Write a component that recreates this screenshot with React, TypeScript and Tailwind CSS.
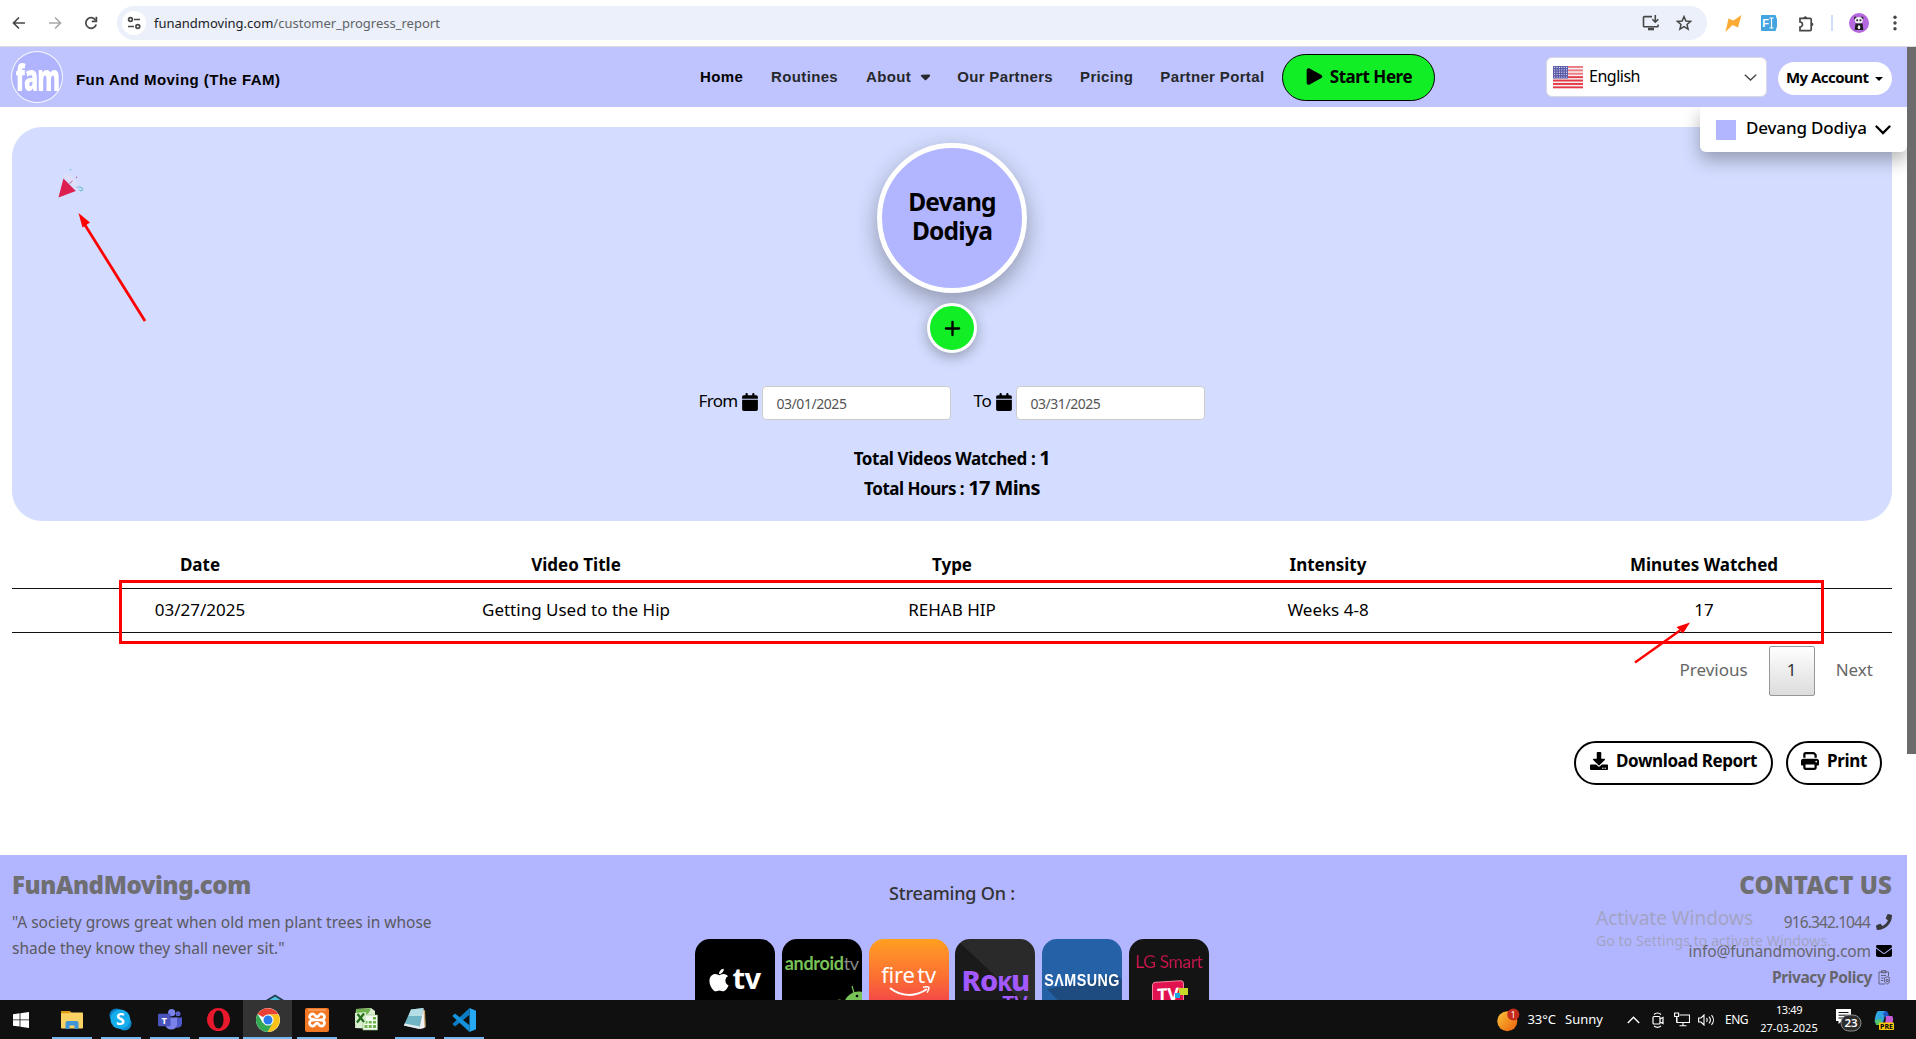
import type { ReactNode } from 'react'
import { FaPlay, FaPlus, FaCalendar, FaPrint, FaEnvelope, FaCaretDown, FaApple } from 'react-icons/fa6'
import { FaDownload, FaPhone } from 'react-icons/fa'

function BrowserBar() {
  return (
    <div className="flex h-[47px] shrink-0 items-center border-b border-[#dcdcdc] bg-white text-[#474747]">
      <svg className="ml-[11px] size-4" viewBox="0 0 16 16" fill="none" stroke="#474747" strokeWidth="1.7">
        <path d="M14 8H3M8 2.5L2.5 8L8 13.5" />
      </svg>
      <svg className="ml-[20px] size-4" viewBox="0 0 16 16" fill="none" stroke="#a9a9a9" strokeWidth="1.7">
        <path d="M2 8h11M8 2.5L13.5 8L8 13.5" />
      </svg>
      <svg className="ml-[20px] size-4" viewBox="0 0 16 16" fill="none" stroke="#474747" strokeWidth="1.7">
        <path d="M13.2 9.4A5.3 5.3 0 1 1 12.6 5.2" />
        <path d="M13.4 1.8v4.6H8.8" />
      </svg>
      <div className="ml-[18px] flex h-[34px] w-[1590px] items-center rounded-full bg-[#ebf0fa] pl-[5px]">
        <div className="flex size-6 items-center justify-center rounded-full bg-white">
          <svg className="size-[14px]" viewBox="0 0 14 14" fill="none" stroke="#474747" strokeWidth="1.7">
            <circle cx="3.5" cy="3.5" r="1.9" />
            <path d="M7 3.5h6M1 10.5h6" />
            <circle cx="10.8" cy="10.5" r="1.9" />
          </svg>
        </div>
        <div className="ml-2 text-[13px] leading-none">
          <span className="text-[#202124]">funandmoving.com</span>
          <span className="text-[#5f6368]">/customer_progress_report</span>
        </div>
        <svg className="ml-auto h-4 w-[18px]" viewBox="0 0 18 16" fill="none" stroke="#474747" strokeWidth="1.6">
          <path d="M10 1.6H2.4a.9.9 0 0 0-.9.9v8.4c0 .5.4.9.9.9h12.8c.5 0 .9-.4.9-.9V9.4" />
          <path d="M13.3 0v6.8M10.3 4.2l3 3l3-3" />
          <path d="M6 14h6" strokeWidth="2.6" />
        </svg>
        <svg className="mr-[15px] ml-[16px] size-[16px]" viewBox="0 0 16 16" fill="none" stroke="#474747" strokeWidth="1.5">
          <path d="M8 1.6l1.9 4.4l4.7.4l-3.6 3.1l1.1 4.7L8 11.7l-4.1 2.5L5 9.5L1.400 6.400l4.700-.4z" />
        </svg>
      </div>
      <svg className="ml-[17px] h-[17px] w-[18px]" viewBox="0 0 18 17">
        <path d="M1.500 17L4.500 3.500L9.500 5.500L17.500 0L14 12.500L8.500 10z" fill="#fbab35" />
      </svg>
      <div className="relative ml-[19px] flex h-4 w-4 items-center justify-center rounded-[1px] bg-[#43a4e0] text-[11px] leading-none font-bold text-white">
        <svg className="absolute inset-0 h-4 w-4" viewBox="0 0 16 16" fill="none" stroke="#fff">
          <path d="M8.500 3h4M8.500 13h4M10.500 3v10" strokeWidth="1.200" />
          <path d="M14.500 0L16 4.500V0z M14.500 16L16 11.500V16z" fill="#fff" stroke="none" />
        </svg>
        <span className="mr-[7px] font-['Liberation_Sans']">F</span>
      </div>
      <svg className="ml-[21px] h-[17px] w-[17px]" viewBox="0 0 17 17" fill="none" stroke="#474747" strokeWidth="1.7">
        <path d="M2 3.400h10.200a1 1 0 0 1 1 1v10.200a1 1 0 0 1-1 1H2v-3.600a2.500 2.500 0 0 0 0-5z" />
        <path d="M5.800 3.200a1.500 1.500 0 0 1 3 0zM13.400 7.800a1.500 1.500 0 0 1 0 3z" fill="#474747" strokeWidth="1" />
      </svg>
      <div className="ml-[16px] h-4 w-[2px] bg-[#cfdffb]" />
      <svg className="ml-[16px] size-5" viewBox="0 0 20 20">
        <circle cx="10" cy="10" r="10" fill="#b468e0" />
        <circle cx="6.500" cy="5" r="1.500" fill="#222" />
        <circle cx="13" cy="5" r="1.500" fill="#222" />
        <ellipse cx="9.800" cy="7.200" rx="4" ry="3.200" fill="#f0eef2" />
        <circle cx="8.200" cy="7.200" r="1" fill="#222" />
        <circle cx="11.500" cy="7.200" r="1" fill="#222" />
        <path d="M6.500 10.500h7l.8 6.500h-8.600z" fill="#1d1a20" />
        <ellipse cx="10" cy="14.300" rx="1.300" ry="2" fill="#f0eef2" />
      </svg>
      <svg className="ml-[24px] h-4 w-1" viewBox="0 0 4 16" fill="#474747">
        <circle cx="2" cy="2.200" r="1.700" />
        <circle cx="2" cy="8" r="1.700" />
        <circle cx="2" cy="13.800" r="1.700" />
      </svg>
    </div>
  )
}

function Flag() {
  return (
    <svg className="h-[23px] w-[30px]" viewBox="0 0 30 23">
      <rect width="30" height="22" fill="#f4f1f1" />
      {[0, 1, 2, 3, 4, 5, 6].map((i) => (
        <rect key={i} y={i * 3.4} width="30" height="1.900" fill={i < 3 ? '#ee7b84' : '#e63946'} />
      ))}
      <rect width="15" height="12.500" fill="#5a5aa8" />
      {[0, 1, 2, 3, 4].map((r) =>
        [0, 1, 2, 3, 4, 5].map((c) => (
          <circle key={`${r}-${c}`} cx={1.6 + c * 2.4} cy={1.4 + r * 2.4} r=".6" fill="#e6e6f5" />
        )),
      )}
    </svg>
  )
}

function SiteHeader() {
  return (
    <header className="relative flex h-[60px] shrink-0 items-center bg-[#bfc4ff]">
      <div className="flex w-[700px] shrink-0 items-center pl-[11px]">
        <div className="flex size-[52px] shrink-0 items-center justify-center rounded-full border-[1.5px] border-white/90 bg-[#b0b3fe]">
          <span className="origin-center scale-x-[0.74] scale-y-[1.18] font-['Open_Sans'] text-[31px] leading-none font-extrabold tracking-[-1.5px] text-white">
            fam
          </span>
        </div>
        <span className="mt-[4px] ml-[13px] font-['Liberation_Sans'] text-[15px] leading-none font-bold tracking-[0.45px] whitespace-nowrap text-black">
          Fun And Moving (The FAM)
        </span>
      </div>
      <nav className="mb-[2px] flex items-center gap-[27px] font-['Liberation_Sans'] text-[15px] leading-none font-bold tracking-[0.35px] whitespace-nowrap text-[#26282c]">
        <span className="text-black">Home</span>
        <span className="ml-px">Routines</span>
        <span className="ml-px flex items-center">
          About
          <FaCaretDown className="ml-[7px] size-[15px]" />
        </span>
        <span className="-ml-[3px]">Our Partners</span>
        <span>Pricing</span>
        <span>Partner Portal</span>
      </nav>
      <button className="ml-[18px] flex h-[47px] w-[153px] items-center justify-center rounded-full border border-black bg-[#11ee25] pb-px text-[17px] font-bold tracking-[-0.45px] text-black">
        <FaPlay className="mr-[7px] h-[19px] w-[17px] scale-x-110" />
        Start Here
      </button>
      <div className="ml-auto flex h-[40px] w-[221px] items-center rounded-[6px] border border-[#d8d8e2] bg-white pl-[6px] text-black">
        <Flag />
        <span className="mb-[2px] ml-[6px] text-[16px] tracking-[-0.49px]">English</span>
        <svg className="mr-[9px] ml-auto h-[7px] w-[13px]" viewBox="0 0 13 7" fill="none" stroke="#4a4a4a" strokeWidth="1.500">
          <path d="M.8.700l5.700 5.300L12.200.700" />
        </svg>
      </div>
      <div className="mt-[3px] mr-[15px] ml-[11px] flex h-[33px] w-[114px] items-center rounded-full bg-white pb-[2px] pl-[8px] text-[15px] font-bold tracking-[-0.55px] text-black">
        My Account
        <svg className="mt-[3px] ml-[7px] h-[4px] w-[8px]" viewBox="0 0 8 4">
          <path d="M0 0h8L4 4z" />
        </svg>
      </div>
      <div className="absolute top-[60px] right-0 z-10 flex h-[45px] w-[207px] items-center rounded-b-[6px] bg-white pl-4 text-[17px] font-medium tracking-[-0.16px] text-black shadow-[0_8px_18px_rgba(0,0,0,0.3)] [clip-path:inset(0_0_-40px_-40px)]">
        <span className="size-5 bg-[#b2b5ff]" />
        <span className="mb-[3px] ml-[10px]">Devang Dodiya</span>
        <svg className="ml-[8px] h-[10px] w-[16px]" viewBox="0 0 16 10" fill="none" stroke="#000" strokeWidth="2.300" strokeLinecap="round">
          <path d="M1.500 1.500L8 8l6.500-6.500" />
        </svg>
      </div>
    </header>
  )
}

function DateField({ label, value, labelClass }: { label: string; value: string; labelClass: string }) {
  return (
    <label className="flex items-center">
      <span className={`mb-[4px] text-[17px] ${labelClass}`}>{label}</span>
      <FaCalendar className="mr-[4px] mb-[3px] ml-[5px] h-[18px] w-[16px]" />
      <span className="flex h-[34px] w-[189px] items-center rounded-[4px] border border-[#ccc] bg-white pl-[13px] text-[14px] tracking-[-0.45px] text-[#555]">
        {value}
      </span>
    </label>
  )
}

function SummaryPanel() {
  return (
    <section className="relative mt-[20px] ml-[12px] flex h-[394px] w-[1880px] shrink-0 flex-col items-center rounded-[30px] bg-[#d4ddff] pt-[16px] text-black">
      <svg className="absolute top-[40px] left-[44px] h-8 w-8" viewBox="0 0 32 32">
        <path d="M7.500 9c3-4.500 13 1.500 14 13z" fill="#e0def5" />
        <path d="M7.400 11.500L19.800 24L2.500 30.500z" fill="#dc1f4e" />
        <circle cx="14.500" cy="2.700" r=".9" fill="#86c5d8" />
        <circle cx="20.600" cy="10.300" r=".7" fill="#c2558a" />
        <path d="M20.500 20.500c2-1 5.500-.5 6 1.500s-2.500 2.500-3 .5" fill="none" stroke="#7cc0d4" strokeWidth="1.200" />
        <path d="M13.500 16.500l3-2.500" stroke="#b35a93" />
      </svg>
      <div className="flex size-[150px] shrink-0 items-center justify-center rounded-full border-[5px] border-white bg-[#b2b5ff] pb-[5px] text-center text-[24.500px] leading-[29px] font-bold tracking-[-0.75px] shadow-[0_8px_22px_rgba(0,0,0,0.32)]">
        Devang
        <br />
        Dodiya
      </div>
      <div className="mt-[10px] flex size-[50px] shrink-0 items-center justify-center rounded-full border-[3px] border-white bg-[#11ee25] shadow-[0_4px_14px_rgba(0,0,0,0.3)]">
        <FaPlus className="size-[19px]" />
      </div>
      <div className="mt-[33px] flex gap-[22px]">
        <DateField label="From" value="03/01/2025" labelClass="tracking-[-0.7px]" />
        <DateField label="To" value="03/31/2025" labelClass="tracking-[-0.3px]" />
      </div>
      <p className="mt-[23px] text-[17px] leading-[31px] font-bold tracking-[-0.4px]">
        Total Videos Watched : <span className="text-[20px] leading-none">1</span>
      </p>
      <p className="text-[17px] leading-[30px] font-bold tracking-[-0.48px]">
        Total Hours : <span className="text-[20px] leading-none tracking-[-0.6px]">17 Mins</span>
      </p>
    </section>
  )
}

const columns = ['Date', 'Video Title', 'Type', 'Intensity', 'Minutes Watched']
const row = ['03/27/2025', 'Getting Used to the Hip', 'REHAB HIP', 'Weeks 4-8', '17']

function ReportTable() {
  return (
    <div className="relative mt-[20px] ml-[12px] w-[1880px] shrink-0 text-center text-[17px] text-black">
      <div className="grid h-[48px] grid-cols-5 items-center border-b border-[#111] font-bold">
        {columns.map((c) => (
          <span key={c}>{c}</span>
        ))}
      </div>
      <div className="grid h-[44px] grid-cols-5 items-center border-b border-[#111] pb-px">
        {row.map((c) => (
          <span key={c}>{c}</span>
        ))}
      </div>
      <div className="absolute top-[39px] left-[107px] h-[64px] w-[1705px] border-[3px] border-[#f00]" />
    </div>
  )
}

function Actions() {
  return (
    <>
      <div className="mt-[13px] flex h-[50px] w-[1892px] shrink-0 items-center justify-end text-[17px] text-[#666]">
        <span className="mb-[3px]">Previous</span>
        <span className="mx-[21px] flex h-[50px] w-[46px] items-center justify-center rounded-[2px] border border-[#979797] bg-linear-to-b from-white to-[#dcdcdc] pb-[3px] text-[#333]">
          1
        </span>
        <span className="mr-[19px] mb-[3px]">Next</span>
      </div>
      <div className="mt-[45px] flex h-[44px] w-[1882px] shrink-0 justify-end gap-[13px] text-[17px] font-bold text-black">
        <button className="flex w-[199px] items-center justify-center rounded-full border-2 border-black pb-[4px] tracking-[-0.4px]">
          <FaDownload className="mr-[8px] size-[18px]" />
          Download Report
        </button>
        <button className="flex w-[96px] items-center justify-center rounded-full border-2 border-black pb-[4px] tracking-[-0.3px]">
          <FaPrint className="mr-[8px] size-[18px]" />
          Print
        </button>
      </div>
    </>
  )
}

function Tile({ className, children }: { className: string; children: ReactNode }) {
  return <div className={`relative h-[80px] w-[80px] overflow-hidden rounded-[15px] ${className}`}>{children}</div>
}

function StreamingTiles() {
  return (
    <div className="mt-[27px] flex gap-[6.8px]">
      <Tile className="flex justify-center bg-black pt-[25px] text-white">
        <FaApple className="mt-[3px] mr-[3px] h-[26px] w-[20px] shrink-0" />
        <span className="text-[29px] leading-[28px] font-bold tracking-[-0.5px]">tv</span>
      </Tile>
      <Tile className="bg-black text-center">
        <span className="mt-[14px] block font-['Lato'] text-[18px] leading-[20px] font-bold tracking-[-0.3px] text-[#78c257]">
          android<span className="font-normal text-[#8a8a8a]">tv</span>
        </span>
        <svg className="absolute top-[46px] right-0 h-[34px] w-[26px]" viewBox="0 0 26 34">
          <path d="M7 20C10 10 18 5 26 7v27H0z" fill="#78c257" />
          <path d="M18 8L16 1M9 16L2 15" stroke="#78c257" strokeWidth="1.200" />
          <circle cx="21" cy="11" r="1.300" fill="#000" />
          <circle cx="12" cy="18" r="1.300" fill="#000" />
        </svg>
      </Tile>
      <Tile className="bg-linear-to-b from-[#ff9f1e] via-[#fb6c33] via-50% to-[#ec1d50] text-center text-white">
        <span className="mt-[23px] block text-[22px] leading-[24px] tracking-[-0.2px] [word-spacing:-3px]">fire tv</span>
        <svg className="absolute top-[47px] left-[20px] h-[12px] w-[42px]" viewBox="0 0 42 12" fill="none" stroke="#fff" strokeWidth="2">
          <path d="M1 2C12 11 27 11 38 3" />
          <path d="M34 1.200c3-.6 6-.5 6 .4s-.5 3-2 5" strokeWidth="1.500" />
        </svg>
      </Tile>
      <Tile className="bg-[linear-gradient(43deg,#1a1a1a_52%,#2a2a2a_52.500%)] text-center text-[#a259ff]">
        <span className="mt-[26px] block h-[27px] text-[29px] leading-[29px] font-extrabold tracking-[-1px]">
          Ro<span className="text-[22px]">K</span>u
        </span>
        <span className="mr-[8px] block text-right text-[21px] leading-[24px] font-semibold">TV</span>
      </Tile>
      <Tile className="bg-[#2561a6] text-center text-white">
        <svg className="absolute inset-0" viewBox="0 0 80 80" fill="#1e4b80">
          <path d="M5 50L76 36l4 5v39H34z" />
        </svg>
        <span className="relative mt-[33px] block font-['Liberation_Sans'] text-[17px] leading-[18px] font-bold">
          <span className="-mx-2 inline-block scale-x-[0.84] tracking-[0.6px]">S&Lambda;MSUNG</span>
        </span>
      </Tile>
      <Tile className="bg-[#141414] text-center">
        <span className="mt-[13px] block bg-linear-to-b from-[#a01440] to-[#e0174f] bg-clip-text font-['Lato'] text-[17.500px] leading-[20px] tracking-[-0.4px] text-transparent">
          LG Smart
        </span>
        <div className="mt-[9px] ml-[23px] flex h-[40px] w-[32px] -skew-y-3 justify-center rounded-[4px] border border-[#f3849f] bg-[#e01350] text-[18px] leading-[25px] font-bold text-white">
          TV
        </div>
        <span className="absolute top-[49px] left-[50px] h-[7px] w-[9px] bg-[#c8d92b]" />
        <span className="absolute top-[54px] left-[46px] h-[5px] w-[5px] bg-[#19a8e0]" />
      </Tile>
    </div>
  )
}

function Footer() {
  return (
    <footer className="relative mt-[70px] flex h-[145px] shrink-0 overflow-hidden bg-[#b2b5ff] px-[12px] text-[15.5px]">
      <div className="w-[683px] shrink-0 text-[#5a5a60]">
        <h2 className="mt-[13px] text-[24px] leading-[34px] font-black tracking-[-0.4px] text-[#6f6f72]">FunAndMoving.com</h2>
        <p className="mt-[7px] leading-[26px]">
          "A society grows great when old men plant trees in whose
          <br />
          shade they know they shall never sit."
        </p>
      </div>
      <div className="flex w-[514px] shrink-0 flex-col items-center">
        <p className="mt-[26px] text-[18px] leading-[25px] font-medium tracking-[-0.2px] text-[#333]">Streaming On :</p>
        <div className="mt-[6px]">
          <StreamingTiles />
        </div>
      </div>
      <div className="mr-[3px] flex flex-1 flex-col items-end text-[#66666c]">
        <h2 className="mt-[13px] text-[24px] leading-[34px] font-black tracking-[0.1px] text-[#6f6f72]">CONTACT US</h2>
        <p className="mt-[7px] flex items-center leading-[26px]">
          <span className="tracking-[-0.9px]">916.342.1044</span>
          <FaPhone className="ml-[6px] size-4 text-[#3a3a3e]" />
        </p>
        <p className="mt-[3px] flex items-center leading-[26px] tracking-[-0.1px]">
          info@funandmoving.com
          <FaEnvelope className="ml-[5px] size-4 text-black" />
        </p>
        <p className="flex items-center leading-[26px] font-bold tracking-[-0.4px]">
          Privacy Policy
          <svg className="mr-[2px] ml-[6px] h-[15px] w-[12px]" viewBox="0 0 12 15" fill="none" stroke="#5a5a70" strokeWidth=".9">
            <path d="M10.500 6.500V2H1v12h6M3.500 2V.7h4.500V2.800H3.500zM3 5.500h5M3 8h2.500M3 10.500h2.500" />
            <path d="M6.500 7.800l2.700-1l2.500 1v3c0 1.500-1.200 2.600-2.500 3.200c-1.500-.6-2.700-1.700-2.700-3.200zM8.200 9.500h2v2h-2z" />
          </svg>
        </p>
      </div>
      <svg className="absolute bottom-0 left-[266px] h-[6px] w-[18px]" viewBox="0 0 18 6">
        <path d="M0 6L9 .5L18 6z" fill="#253c4e" />
        <path d="M3.500 6L9 2.500L14.500 6z" fill="#4cc0dc" />
      </svg>
      <div className="absolute top-[50px] left-[1596px] whitespace-nowrap text-[#9d9eae]/75">
        <p className="text-[19px] leading-[26px]">Activate Windows</p>
        <p className="text-[14px] leading-[19px] tracking-[0.09px]">Go to Settings to activate Windows.</p>
      </div>
    </footer>
  )
}

function TaskItem({ active, bar, children }: { active?: boolean; bar?: boolean; children: ReactNode }) {
  return (
    <div className={`relative flex w-[49px] items-center justify-center ${active ? 'bg-[#333]' : ''}`}>
      {children}
      {bar && <span className={`absolute bottom-0 h-[2px] bg-[#76b9ed] ${active ? 'w-full' : 'w-[40px]'}`} />}
    </div>
  )
}

function Taskbar() {
  return (
    <div className="flex h-[39px] shrink-0 bg-[#101010] text-white">
      <div className="flex w-[47px] shrink-0 items-center pl-[13px]">
        <svg className="size-4" viewBox="0 0 16 16" fill="#fff">
          <path d="M0 2.200L6.600 1.300V7.500H0zM7.400 1.200L16 0V7.500H7.400zM0 8.300h6.600v6.300L0 13.700zM7.400 8.300H16V16l-8.600-1.200z" />
        </svg>
      </div>
      <TaskItem bar>
        <svg className="h-[18px] w-[22px]" viewBox="0 0 22 18">
          <path d="M0 0h9l1.500 2H0z" fill="#e0a011" />
          <rect y="1.500" width="22" height="16" rx=".8" fill="#fbd365" />
          <path d="M0 0h8l1 2.200H0z" fill="#dc9a10" />
          <path d="M4.500 18v-6a2 2 0 0 1 2-2h9a2 2 0 0 1 2 2v6h-4v-3.500h-5V18z" fill="#3f95d8" />
        </svg>
      </TaskItem>
      <TaskItem bar>
        <svg className="size-[23px]" viewBox="0 0 23 23">
          <circle cx="7.500" cy="7.500" r="7" fill="#0c7fc2" />
          <circle cx="15.500" cy="15.500" r="7" fill="#0f8ccf" />
          <circle cx="11.300" cy="11.300" r="9.800" fill="#16adec" />
          <text x="11.300" y="17" textAnchor="middle" fill="#fff" fontSize="16" fontWeight="700" fontFamily="Noto Sans">S</text>
        </svg>
      </TaskItem>
      <TaskItem bar>
        <svg className="h-[22px] w-[24px]" viewBox="0 0 24 22">
          <circle cx="20" cy="4.800" r="2.500" fill="#5a62c9" />
          <circle cx="13.700" cy="3.700" r="3.600" fill="#7b83eb" />
          <path d="M17 8.500h7v6a4.500 4.500 0 0 1-6 4z" fill="#5059c9" />
          <path d="M7.500 8.500h11.500v7a5.800 5.800 0 0 1-11.500 0z" fill="#7b83eb" />
          <rect y="4.800" width="12.500" height="12.500" rx="1" fill="#4b53bc" />
          <text x="6.200" y="14.500" textAnchor="middle" fill="#fff" fontSize="9.500" fontWeight="700" fontFamily="Noto Sans">T</text>
        </svg>
      </TaskItem>
      <TaskItem bar>
        <svg className="size-[23px]" viewBox="0 0 23 23">
          <path fillRule="evenodd" fill="#e8182d" d="M11.500 0a11.500 11.500 0 1 0 0 23a11.500 11.500 0 0 0 0-23zM11.500 2.500c3.200 0 5 4.200 5 9s-1.800 9-5 9s-5-4.200-5-9s1.800-9 5-9z" />
        </svg>
      </TaskItem>
      <TaskItem active bar>
        <svg className="size-[24px]" viewBox="0 0 24 24">
          <circle cx="12" cy="12" r="12" fill="#fff" />
          <path d="M12 12L1.600 6A12 12 0 0 1 22.400 6.500H12z" fill="#ea4335" />
          <path d="M12 12L12 6.500H22.400A12 12 0 0 1 11.500 24L17 14z" fill="#fbc116" />
          <path d="M12 12L17 14.500L11.500 24A12 12 0 0 1 1.600 6L7 15z" fill="#34a853" />
          <circle cx="12" cy="12" r="5.600" fill="#fff" />
          <circle cx="12" cy="12" r="4.500" fill="#2a7bea" />
        </svg>
      </TaskItem>
      <TaskItem bar>
        <svg className="size-6" viewBox="0 0 24 24">
          <rect width="24" height="24" rx="2" fill="#f37623" />
          <path d="M3 2h18" stroke="#fbb98a" />
          <g fill="none" stroke="#fff" strokeWidth="2.700" strokeLinejoin="round">
            <path d="M9.500 12h5c3 0 5 1 5 3s-2 3.500-3.800 3S13.500 15 12 15s-1.900 2.500-3.700 3s-3.800-1-3.800-3s2-3 5-3s-5-1-5-3s2-3.500 3.800-3S10.500 9 12 9s1.900-2.500 3.700-3s3.800 1 3.800 3s-2 3-5 3" />
          </g>
        </svg>
      </TaskItem>
      <TaskItem>
        <svg className="h-[23px] w-[24px]" viewBox="0 0 24 23">
          <path d="M2 1l15-1l4 3v18L1 20z" fill="#d9efd0" />
          <path d="M2 1L17 .5l-2 4L3 14z" fill="#6db24a" />
          <rect x="9" y="7" width="14.500" height="15" fill="#f3faef" stroke="#8abf72" strokeWidth=".6" />
          <path d="M10.500 13h3v2.500h-3zM14.700 13h3v2.500h-3zM19 13h3v2.500h-3zM10.500 17h3v3h-3zM14.700 17h3v3h-3zM19 17h3v3h-3zM19 9h3v2.500h-3z" fill="#6db24a" />
          <path d="M1 5l11-1v11L1 16z" fill="#d6edcb" />
          <path d="M3.500 6l6.500 8M10 5.500L3 14.500" stroke="#236b1a" strokeWidth="2.200" />
        </svg>
      </TaskItem>
      <TaskItem bar>
        <svg className="size-[23px]" viewBox="0 0 23 23">
          <path d="M18 3l4-1l.8 17l-6 2z" fill="#c9a56c" />
          <path d="M8 1.500L20.500 0L16.500 21L.8 17.500z" fill="#6fb5c6" />
          <path d="M8 1.500L20.500 0L19 8L5.500 8z" fill="#b5dde5" />
          <path d="M.8 17.500L16.500 21l.5-2.500L1.800 15.500z" fill="#e8eef0" />
          <path d="M20.500 0l1 20l-5 1z" fill="#eef2f2" />
        </svg>
      </TaskItem>
      <TaskItem bar>
        <svg className="size-[24px]" viewBox="0 0 24 24">
          <path d="M17.500 0L24 2.800v18.400L17.500 24z" fill="#27a8f2" />
          <path d="M17.500 0v6.800L3 18.500L.3 16z" fill="#0b7cc4" />
          <path d="M17.500 24v-6.800L3 5.500L.3 8z" fill="#1592dc" />
        </svg>
      </TaskItem>

      <div className="ml-auto flex items-center text-[13px]">
        <svg className="h-[24px] w-[24px]" viewBox="0 0 24 24">
          <defs>
            <linearGradient id="sun" x1="0" y1="0" x2="1" y2="1">
              <stop offset="0" stopColor="#fbc43a" />
              <stop offset="1" stopColor="#ec5f0c" />
            </linearGradient>
          </defs>
          <circle cx="10.300" cy="13.200" r="10" fill="url(#sun)" />
          <circle cx="16.300" cy="6.500" r="6" fill="#c42b1c" />
          <text x="16.300" y="9.500" textAnchor="middle" fill="#fff" fontSize="8.500" fontFamily="Noto Sans">1</text>
        </svg>
        <span className="ml-[6px]">33°C</span>
        <span className="ml-[9px]">Sunny</span>
        <svg className="ml-[24px] h-[8px] w-[13px]" viewBox="0 0 13 8" fill="none" stroke="#fff" strokeWidth="1.400">
          <path d="M.8 7l5.700-5.700L12.200 7" />
        </svg>
        <svg className="ml-[12px] h-4 w-[12px]" viewBox="0 0 12 16" fill="none" stroke="#fff" strokeWidth="1.200">
          <rect x="1" y="4.500" width="7" height="7.500" rx="1" />
          <path d="M8 7l3-1.500v6L8 10M2 2.500c2-1.800 5-1.800 7 0M2 14c2 1.500 5 1.500 7 0" />
        </svg>
        <svg className="ml-[10px] h-[15px] w-[16px]" viewBox="0 0 16 15" fill="none" stroke="#fff" strokeWidth="1.100">
          <path d="M5.500 3h10v7.500H3V5.500M9 10.500v3M5.500 13.800h7M.6 1h4v3.500h-4zM2.600 4.500v6" />
        </svg>
        <svg className="ml-[8px] h-[12px] w-[17px]" viewBox="0 0 17 12" fill="none" stroke="#fff" strokeWidth="1.100">
          <path d="M.6 4h2.400L6 1v10L3 8H.6zM8.500 4.200c.8 1 .8 2.600 0 3.600M11 2.600c1.700 2 1.700 4.800 0 6.800M13.500 1.200c2.500 2.800 2.500 6.800 0 9.600" />
        </svg>
        <span className="ml-[10px] text-[12px] tracking-[-0.5px]">ENG</span>
        <div className="ml-[11px] flex w-[60px] flex-col items-center pb-[2px] text-[11px] leading-[17.500px] whitespace-nowrap">
          <span className="tracking-[-0.4px]">13:49</span>
          <span>27-03-2025</span>
        </div>
        <svg className="ml-[16px] h-[26px] w-[27px]" viewBox="0 0 27 26">
          <path d="M1 2h15v12H7l-3.500 3v-3H1z" fill="#fff" />
          <path d="M3.500 5.500h10M3.500 8.200h10M3.500 11h6" stroke="#101010" strokeWidth="1" />
          <rect x="6" y="8" width="20" height="16" rx="8" fill="#2d2d2d" stroke="#8a8a8a" />
          <text x="16" y="20.300" textAnchor="middle" fill="#fff" fontSize="11.500" fontWeight="600" fontFamily="Noto Sans">23</text>
        </svg>
        <svg className="mr-[22px] ml-[12px] h-[20px] w-[20px]" viewBox="0 0 20 20">
          <path d="M4 1h8l-3 12H1C0 10 2 2 4 1z" fill="#2fa6e0" />
          <path d="M11 1c3 0 3 2 4 5l-4 1L9 4z" fill="#2058c8" />
          <path d="M12 6h6c2 1 1 8-1 10h-6z" fill="#c65bd8" />
          <path d="M1 10l7-1l-2 6H2z" fill="#54c66a" />
          <rect x="5" y="12.500" width="15" height="7.500" rx="1" fill="#ffc905" />
          <text x="12.500" y="19" textAnchor="middle" fill="#101010" fontSize="7" fontWeight="800" fontFamily="Noto Sans">PRE</text>
        </svg>
      </div>
    </div>
  )
}

export default function App() {
  return (
    <div className="relative flex h-[1039px] w-[1916px] flex-col overflow-hidden bg-white font-['Noto_Sans',sans-serif]">
      <BrowserBar />
      <div className="flex min-h-0 flex-1 overflow-hidden">
        <main className="flex w-[1907px] shrink-0 flex-col overflow-hidden">
          <SiteHeader />
          <SummaryPanel />
          <ReportTable />
          <Actions />
          <Footer />
        </main>
        <div className="w-[9px] bg-white">
          <div className="h-[707px] bg-[#6b6b6b]" />
        </div>
      </div>
      <Taskbar />
      <svg className="absolute top-[212px] left-[76px] h-[112px] w-[72px]" viewBox="0 0 72 112">
        <path d="M9 13L69 109" stroke="#f00" strokeWidth="2.800" />
        <path d="M2.500 1L14 10.500L6.500 15.500z" fill="#f00" />
      </svg>
      <svg className="absolute top-[619px] left-[1632px] h-[46px] w-[60px]" viewBox="0 0 60 46">
        <path d="M3 43.500L48 11.500" stroke="#f00" strokeWidth="2.400" />
        <path d="M58 3.500L51 14.500L44.500 8z" fill="#f00" />
      </svg>
    </div>
  )
}
